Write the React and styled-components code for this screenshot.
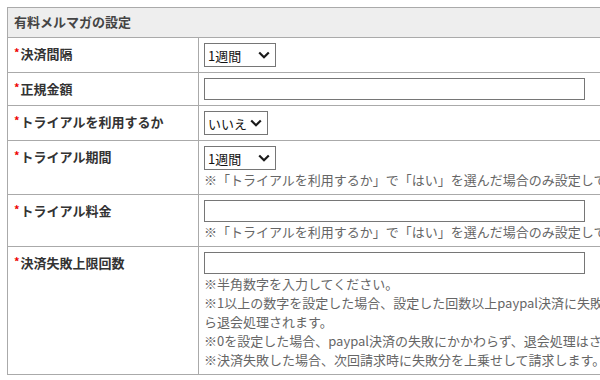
import React from "react";
import styled, { createGlobalStyle } from "styled-components";

const Global = createGlobalStyle`
  html, body { margin: 0; padding: 0; overflow: hidden; background: #fff; }
  body {
    padding: 7px;
    font-family: "Noto Sans CJK JP", "Noto Sans", sans-serif;
    font-size: 13px;
    color: #333;
  }
`;

const Table = styled.table`
  border-collapse: collapse;
  table-layout: fixed;
  width: 647px;
  border: 1px solid #aaa;
`;

const HeadCell = styled.th`
  background: #eee;
  border: 1px solid #aaa;
  text-align: left;
  font-weight: bold;
  font-size: 13px;
  line-height: 18px;
  color: #444;
  padding: 5px 6px 6px;
  height: 18px;
`;

const Label = styled.th`
  border: 1px solid #aaa;
  text-align: left;
  vertical-align: top;
  font-weight: bold;
  font-size: 13px;
  line-height: 18px;
  color: #333;
  padding: 7px 6px;
`;

const Req = styled.span`
  color: #e00;
  font-size: 11px;
  font-weight: bold;
  position: relative;
  top: -2px;
  margin-right: 1px;
`;

const Value = styled.td`
  border: 1px solid #aaa;
  vertical-align: top;
  padding: 5px;
`;

const SelectWrap = styled.span`
  position: relative;
  display: inline-block;
  vertical-align: top;
`;

const Select = styled.select`
  appearance: none;
  -webkit-appearance: none;
  display: block;
  width: ${(p) => p.$w}px;
  height: 24px;
  border: 1px solid #767676;
  border-radius: 0;
  background: #fff;
  font-family: "Noto Sans CJK JP", sans-serif;
  font-size: 13px;
  color: #111;
  padding: 0 0 0 3px;
  margin: 0;
  outline: none;
`;

const Chevron = styled.svg`
  position: absolute;
  right: 6px;
  top: 8px;
  pointer-events: none;
`;

const Input = styled.input`
  display: block;
  width: 381px;
  height: 22px;
  box-sizing: border-box;
  border: 1px solid #767676;
  border-radius: 0;
  margin: 0;
  padding: 0 3px;
  font-size: 13px;
  outline: none;
`;

const Note = styled.div`
  color: #666;
  font-size: 13px;
  line-height: 19px;
  white-space: nowrap;
`;

const Dropdown = ({ value, width }) => (
  <SelectWrap>
    <Select $w={width} defaultValue={value}>
      <option>{value}</option>
    </Select>
    <Chevron width="12" height="8" viewBox="0 0 12 8">
      <path d="M1.2 1.5 L6 6.2 L10.8 1.5" fill="none" stroke="#1a1a1a" strokeWidth="2.2" />
    </Chevron>
  </SelectWrap>
);

const TRIAL_NOTE = "※「トライアルを利用するか」で「はい」を選んだ場合のみ設定してください。";

export default function App() {
  return (
    <>
      <Global />
      <Table>
        <colgroup>
          <col style={{ width: 191 }} />
          <col />
        </colgroup>
        <tbody>
          <tr>
            <HeadCell colSpan={2}>有料メルマガの設定</HeadCell>
          </tr>
          <tr>
            <Label><Req>*</Req>決済間隔</Label>
            <Value><Dropdown value="1週間" width={72} /></Value>
          </tr>
          <tr>
            <Label><Req>*</Req>正規金額</Label>
            <Value><Input type="text" /></Value>
          </tr>
          <tr>
            <Label><Req>*</Req>トライアルを利用するか</Label>
            <Value><Dropdown value="いいえ" width={64} /></Value>
          </tr>
          <tr>
            <Label><Req>*</Req>トライアル期間</Label>
            <Value>
              <Dropdown value="1週間" width={72} />
              <Note>{TRIAL_NOTE}</Note>
            </Value>
          </tr>
          <tr>
            <Label><Req>*</Req>トライアル料金</Label>
            <Value>
              <Input type="text" />
              <Note>{TRIAL_NOTE}</Note>
            </Value>
          </tr>
          <tr>
            <Label><Req>*</Req>決済失敗上限回数</Label>
            <Value>
              <Input type="text" />
              <Note>※半角数字を入力してください。</Note>
              <Note>※1以上の数字を設定した場合、設定した回数以上paypal決済に失敗した</Note>
              <Note>ら退会処理されます。</Note>
              <Note>※0を設定した場合、paypal決済の失敗にかかわらず、退会処理はされません。</Note>
              <Note>※決済失敗した場合、次回請求時に失敗分を上乗せして請求します。</Note>
            </Value>
          </tr>
        </tbody>
      </Table>
    </>
  );
}
